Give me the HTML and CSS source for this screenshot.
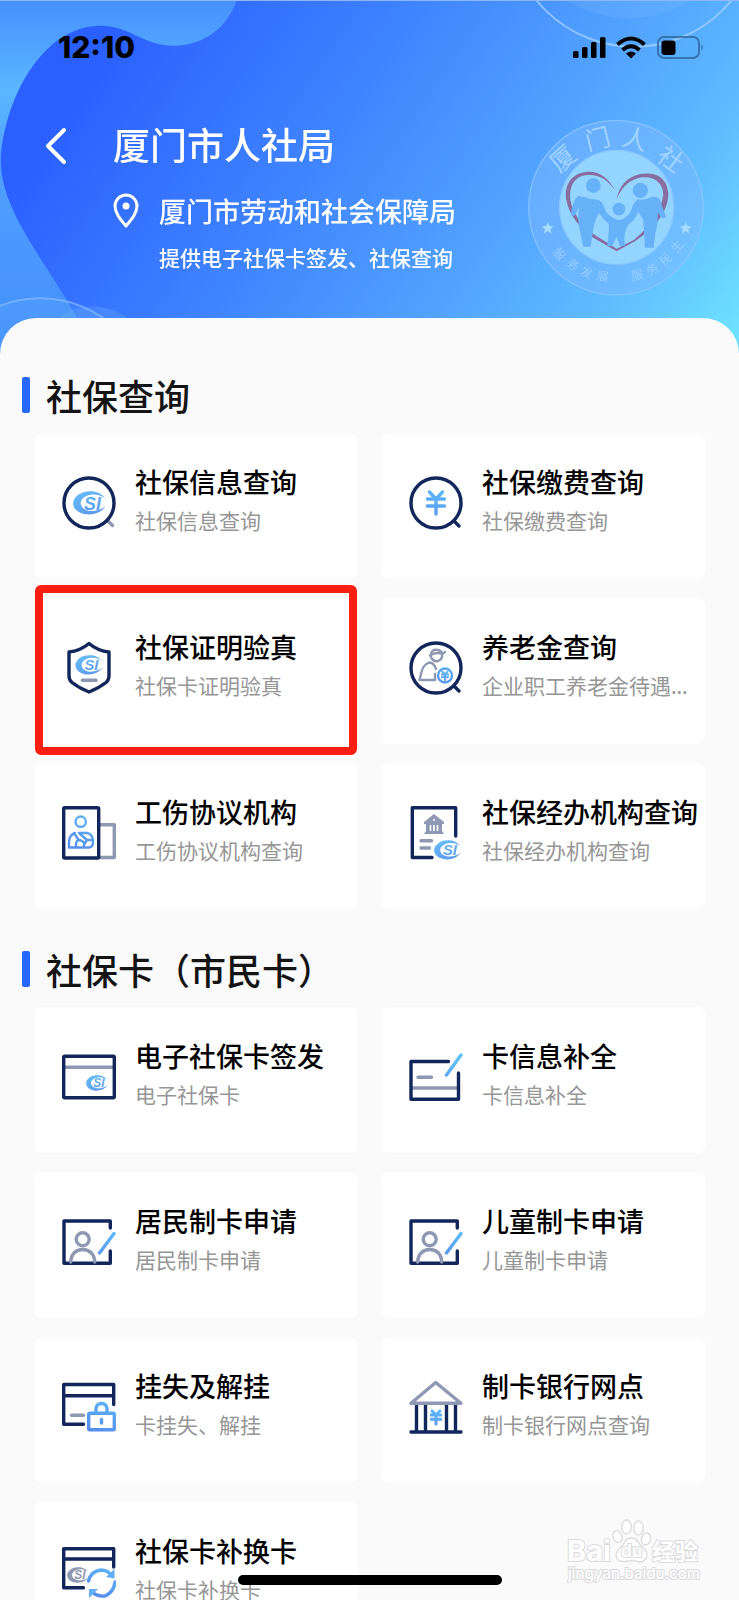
FILE: index.html
```
<!DOCTYPE html>
<html lang="zh-CN">
<head>
<meta charset="utf-8">
<meta name="viewport" content="width=device-width, initial-scale=1">
<title>厦门市人社局</title>
<link rel="stylesheet" href="styles.css">
</head>
<body>
<svg class="sprite" aria-hidden="true">
  <defs>
    <linearGradient id="blue" gradientUnits="userSpaceOnUse" x1="40" y1="6" x2="20" y2="50">
      <stop offset="0" stop-color="#5fc0fb"/><stop offset="1" stop-color="#5688ea"/>
    </linearGradient>
    <linearGradient id="logoBlue" gradientUnits="userSpaceOnUse" x1="20" y1="0" x2="50" y2="70">
      <stop offset="0" stop-color="#66bdf7"/><stop offset="1" stop-color="#5c9bef"/>
    </linearGradient>
    <symbol id="csi" viewBox="0 0 96 70">
      <path d="M93 22C80-2 40-5 18 9C-6 24-5 50 18 62C44 75 80 68 95 44C80 58 52 63 35 54C17 44 18 24 37 15C55 7 80 8 93 22Z"/>
      <text class="csi-text" x="32" y="54">SI</text>
    </symbol>
    <symbol id="yen" viewBox="0 0 20 26">
      <path d="M3.500 2L10 9L16.500 2M1.500 9H18.500M1.500 16H18.500M10 9V24"/>
    </symbol>
    <symbol id="person-card" viewBox="0 0 54 54">
      <path class="navy" d="M48.300 13V6H2V48.300H48.300V36"/>
      <circle class="grey" cx="20.700" cy="24.300" r="6.500"/>
      <path class="grey" d="M8.700 47C9 39 14 34.500 20.700 34.500S32.500 39 32.700 47"/>
      <path class="blue" d="M52 18.500L37.500 38"/>
    </symbol>
  </defs>
</svg>

<div class="app">
  <header class="hero">
    <svg class="hero-bg" viewBox="0 0 739 360" preserveAspectRatio="none" aria-hidden="true">
      <defs>
        <linearGradient id="back" x1="0" y1="0" x2="0" y2="1">
          <stop offset="0" stop-color="#4690ff"/><stop offset=".25" stop-color="#5bb6ff"/>
          <stop offset=".5" stop-color="#4f9fff"/><stop offset="1" stop-color="#438dfb"/>
        </linearGradient>
        <linearGradient id="front" gradientUnits="userSpaceOnUse" x1="80" y1="80" x2="650" y2="460">
          <stop offset="0" stop-color="#2a60ff"/><stop offset=".3" stop-color="#3c7fff"/>
          <stop offset=".6" stop-color="#50a0ff"/><stop offset=".82" stop-color="#60bbff"/><stop offset="1" stop-color="#6de0ff"/>
        </linearGradient>
      </defs>
      <rect width="739" height="360" fill="url(#back)"/>
      <path fill="url(#front)" d="M237 0C227 28 204 46 173 46C143 46 130 26 100 26C48 26 8 88 1 155C-3 205 40 255 72 311L100 360H739V0Z"/>
      <path fill="#76b9ff" fill-opacity=".25" d="M60 318Q92 298 126 318V340H60Z"/>
      <circle cx="629" cy="-101" r="119" fill="#7ec0ff" fill-opacity=".22"/>
      <circle cx="634" cy="-78" r="125" fill="none" stroke="#a6d6ff" stroke-opacity=".7" stroke-width="2"/>
      <circle cx="40" cy="411" r="111" fill="#62b2ff" fill-opacity=".2" stroke="#8fc6ff" stroke-opacity=".6" stroke-width="2"/>
      <path stroke="#8fb8f2" stroke-width="1" d="M0 .5H739"/>
    </svg>

    <svg class="seal" viewBox="0 0 630 630" role="img" aria-label="厦门人社 服务发展 服务民生">
      <circle cx="318" cy="323" r="262" fill="#80b8ff" fill-opacity=".45" stroke="#8cc8ff" stroke-opacity=".8" stroke-width="4"/>
      <circle cx="320" cy="322" r="171" fill="#94d5ff" stroke="#8ac9ff" stroke-width="4"/>
      <g class="seal-name">
        <text transform="translate(160 178) rotate(-42)" y="24">厦</text>
        <text transform="translate(264 120) rotate(-14)" y="24">门</text>
        <text transform="translate(375 120) rotate(15)" y="24">人</text>
        <text transform="translate(480 180) rotate(36)" y="24">社</text>
      </g>
      <g class="seal-motto">
        <text transform="translate(147 463) rotate(48)" y="12">服</text>
        <text transform="translate(187 495) rotate(37)" y="12">务</text>
        <text transform="translate(230 518) rotate(24)" y="12">发</text>
        <text transform="translate(278 530) rotate(10)" y="12">展</text>
        <text transform="translate(382 526) rotate(-14)" y="12">服</text>
        <text transform="translate(428 508) rotate(-28)" y="12">务</text>
        <text transform="translate(468 478) rotate(-40)" y="12">民</text>
        <text transform="translate(502 440) rotate(-50)" y="12">生</text>
      </g>
      <path id="star" fill="#a5dcff" d="M113 365L118 378L132 379L121 388L125 401L113 393L101 401L105 388L95 379L109 378Z"/>
      <use href="#star" x="414"/>
      <path fill="#876e9f" d="M316 272C285 216 250 214 226 216C180 222 160 262 170 305C178 345 215 390 247 412L320 454L375 424C440 380 474 335 475 280C470 225 430 216 390 222C350 232 328 256 320 298C336 258 362 238 395 232C435 228 460 250 460 285C452 335 425 375 371 420L320 446L250 402C215 375 188 340 181 300C176 258 195 230 226 226C262 221 290 235 316 272Z"/>
      <g fill="#66b1f8">
        <circle cx="250" cy="257" r="22"/><circle cx="391" cy="271" r="23"/><circle cx="327" cy="327" r="19"/>
        <path d="M205 288Q225 290 245 298Q277 296 282 322Q290 350 326 361Q357 354 366 325Q372 305 385 298Q405 302 426 290Q450 288 455 315L468 350Q462 361 450 348L443 336Q446 365 436 400L431 443H405Q402 400 400 360L385 335Q373 362 355 374Q338 398 345 438H330L320 412L306 438H292Q296 400 297 372Q280 360 268 340Q258 350 250 385L242 440H220L209 390Q202 362 207 322L195 346Q184 351 183 342Q188 300 205 288Z"/>
      </g>
    </svg>

    <div class="status">
      <span class="clock">12:10</span>
      <svg class="status-icons" viewBox="0 0 133 25" role="img" aria-label="信号、无线网络和电池">
        <rect x="1" y="16" width="5.500" height="7" rx="1.500"/><rect x="10" y="12" width="5.500" height="11" rx="1.500"/>
        <rect x="19" y="7" width="5.500" height="16" rx="1.500"/><rect x="28" y="2" width="5.500" height="21" rx="1.500"/>
        <g fill="none" stroke="#000" stroke-width="4"><path d="M45.500 9.500Q59 -2.500 72.500 9.500"/><path d="M50.500 15Q59 7.500 67.500 15"/></g>
        <path d="M54 18.500Q59 14.500 64 18.500L59 23.500Z"/>
        <rect x="86" y="2" width="41" height="21" rx="6" fill="none" stroke="#2a6699" stroke-opacity=".8" stroke-width="2"/>
        <rect x="89.500" y="5.500" width="14" height="14.500" rx="3"/>
        <path fill="#2a6699" d="M129.500 9Q132 12.500 129.500 16Z"/>
      </svg>
    </div>

    <div class="nav">
      <button class="back" type="button" aria-label="返回">
        <svg viewBox="0 0 24 40"><path d="M20 4L4 20L20 36"/></svg>
      </button>
      <div class="intro">
        <h1>厦门市人社局</h1>
        <div class="bureau">
          <svg class="pin" viewBox="0 0 26 36" aria-hidden="true"><path d="M13 33C7 26 2 20 2 13A11 11 0 0 1 24 13C24 20 19 26 13 33Z"/><circle cx="13" cy="13" r="3.500"/></svg>
          <p>厦门市劳动和社会保障局</p>
        </div>
        <p class="note">提供电子社保卡签发、社保查询</p>
      </div>
    </div>
  </header>

  <main class="sheet">
    <section>
      <h2>社保查询</h2>
      <div class="cards">
        <a class="card" href="#info">
          <svg class="icon" viewBox="0 0 54 54" aria-hidden="true"><path class="grey" d="M45 44L50.500 49.500"/><circle class="navy" cx="27" cy="27" r="25"/><use class="logo" href="#csi" x="11" y="15" width="33" height="24"/></svg>
          <div class="text"><h3>社保信息查询</h3><p>社保信息查询</p></div>
        </a>
        <a class="card" href="#payment">
          <svg class="icon" viewBox="0 0 54 54" aria-hidden="true"><circle class="navy" cx="27" cy="27" r="25"/><path class="navy" d="M45 45L50 50"/><use class="blue" href="#yen" x="17" y="14" width="20" height="26"/></svg>
          <div class="text"><h3>社保缴费查询</h3><p>社保缴费查询</p></div>
        </a>
        <a class="card marked" href="#verify">
          <svg class="icon" viewBox="0 0 54 54" aria-hidden="true"><path class="navy" d="M27 2.500Q18 10 7 11V35Q7 39 10 41.500Q17 47 27 51Q37 47 44 41.500Q47 39 47 35V11Q36 10 27 2.500Z"/><use class="logo" href="#csi" x="13" y="14" width="28" height="20"/><path class="grey" d="M20.500 39.300H34"/></svg>
          <div class="text"><h3>社保证明验真</h3><p>社保卡证明验真</p></div>
        </a>
        <a class="card" href="#pension">
          <svg class="icon" viewBox="0 0 54 54" aria-hidden="true"><circle class="navy" cx="27" cy="27" r="25"/><path class="navy" d="M45 45L50 50"/>
            <g class="grey thin"><path d="M22 13Q23 8 29 9Q33 10 33 13L36 11M21 14.500Q26 11 33 12.500M22 16Q24 21 29 20Q34 18 33 13M27 28Q25 21.500 20 21.500Q14 24 12.500 31L10.500 39H26V33"/></g>
            <g class="blue thin"><circle cx="36" cy="34.500" r="7"/></g><use class="blue heavy" href="#yen" x="32" y="30" width="8" height="10"/></svg>
          <div class="text"><h3>养老金查询</h3><p>企业职工养老金待遇资格查询</p></div>
        </a>
        <a class="card" href="#injury">
          <svg class="icon" viewBox="0 0 54 54" aria-hidden="true"><path class="grey" d="M38 18.700H52.300V51.500H38"/><rect class="navy" x="1.700" y="1.700" width="35" height="50.300" rx="1"/>
            <g class="blue thin"><circle cx="18.700" cy="15.700" r="5.200"/><path d="M13 27Q7 29 7 36V41.500H27Q31 41 31 36Q31 28 25 27H17L25 34L23 37L18 34Q14 34 14 38V41M12 27L16 33M25 34H31M22 41V38"/></g></svg>
          <div class="text"><h3>工伤协议机构</h3><p>工伤协议机构查询</p></div>
        </a>
        <a class="card" href="#agency">
          <svg class="icon" viewBox="0 0 54 54" aria-hidden="true"><path class="navy" d="M46.700 30V1.700H3.300V51.500H23"/>
            <path class="grey-fill" d="M25 8L35 16V18H33V25L35 28H15L17 25V18H15V16Z"/><path class="gap" d="M21.500 19V25M25 19V25M28.500 19V25M24 14H26"/>
            <path class="grey" d="M12 34.700H22.500M12 42H20.500"/><use class="logo" href="#csi" x="25" y="34" width="27" height="20"/></svg>
          <div class="text"><h3>社保经办机构查询</h3><p>社保经办机构查询</p></div>
        </a>
      </div>
    </section>

    <section>
      <h2>社保卡（市民卡）</h2>
      <div class="cards">
        <a class="card" href="#ecard">
          <svg class="icon" viewBox="0 0 54 54" aria-hidden="true"><path class="grey" d="M3 17.300H51"/><rect class="navy" x="1.700" y="6.300" width="50.600" height="41.500" rx="1"/><use class="logo" href="#csi" x="24" y="25" width="22" height="16"/></svg>
          <div class="text"><h3>电子社保卡签发</h3><p>电子社保卡</p></div>
        </a>
        <a class="card" href="#complete">
          <svg class="icon" viewBox="0 0 54 54" aria-hidden="true"><path class="grey" d="M3 38H49M9 27.300H22.500"/><path class="navy" d="M39.500 11.500H2V49.300H49.500V23"/><path class="blue" d="M52 5L37.500 25"/></svg>
          <div class="text"><h3>卡信息补全</h3><p>卡信息补全</p></div>
        </a>
        <a class="card" href="#resident">
          <svg class="icon" viewBox="0 0 54 54" aria-hidden="true"><use href="#person-card" width="54" height="54"/></svg>
          <div class="text"><h3>居民制卡申请</h3><p>居民制卡申请</p></div>
        </a>
        <a class="card" href="#child">
          <svg class="icon" viewBox="0 0 54 54" aria-hidden="true"><use href="#person-card" width="54" height="54"/></svg>
          <div class="text"><h3>儿童制卡申请</h3><p>儿童制卡申请</p></div>
        </a>
        <a class="card" href="#loss">
          <svg class="icon" viewBox="0 0 54 54" aria-hidden="true"><path class="navy" d="M51.700 24.500V4.500H1.700V44.300H21.500M2 15.700H51"/><path class="grey" d="M9.500 35.300H21.500"/><g class="blue"><rect x="26.700" y="33.300" width="25.600" height="16.500" rx="1"/><path d="M34 33V28.500Q34.500 23.500 39.500 23.500T45 28.500V33M39.500 39.500V43"/></g></svg>
          <div class="text"><h3>挂失及解挂</h3><p>卡挂失、解挂</p></div>
        </a>
        <a class="card" href="#bank">
          <svg class="icon" viewBox="0 0 54 54" aria-hidden="true"><path class="navy" d="M7.500 25V51M16.500 25V51M37.500 25V51M46.500 25V51M2 52H52"/><path class="grey" d="M26.700 2.500L2 23.300H52Z"/><use class="blue heavy" href="#yen" x="21" y="28" width="12" height="19"/></svg>
          <div class="text"><h3>制卡银行网点</h3><p>制卡银行网点查询</p></div>
        </a>
        <a class="card" href="#replace">
          <svg class="icon" viewBox="0 0 54 54" aria-hidden="true"><path class="navy" d="M51.700 22V3.700H1.700V42.700H21.500M2 14H51"/><use class="logo-grey" href="#csi" x="5" y="22" width="22" height="16"/>
            <path class="blue" d="M26.500 36Q29 26 39 25Q46 25 50 31M53 37Q52 47 43 51Q35 52 29 46"/><path class="blue-fill" d="M44 32L52.500 24V33.500ZM27 53V44H36Z"/></svg>
          <div class="text"><h3>社保卡补换卡</h3><p>社保卡补换卡</p></div>
        </a>
      </div>
    </section>
  </main>

  <svg class="watermark" viewBox="0 0 138 68" role="img" aria-label="Baidu 经验 jingyan.baidu.com">
    <text class="wm-bai" x="2" y="43">Bai</text>
    <ellipse cx="52.500" cy="18.500" rx="4.500" ry="6" transform="rotate(-15 52.500 18.500)"/><ellipse cx="61.500" cy="9" rx="4.800" ry="7"/>
    <ellipse cx="73.500" cy="10" rx="4.800" ry="7"/><ellipse cx="81" cy="21" rx="4.500" ry="6" transform="rotate(15 81 21)"/>
    <path d="M66.500 20Q72 20 75 27Q82 32 82 37Q81 45 73 43.500Q66 42 60 43.500Q51 44 51 37Q52 32 58 27Q61 20 66.500 20Z"/>
    <text class="wm-du" x="56" y="39">du</text>
    <text class="wm-cn" x="87" y="42">经验</text>
    <text class="wm-url" x="3" y="61">jingyan.baidu.com</text>
  </svg>
  <div class="home-bar"></div>
</div>
</body>
</html>
```
FILE: styles.css
```
* {
  box-sizing: border-box;
}

body,
h1,
h2,
h3,
p {
  margin: 0;
}

body {
  font-family: "Noto Sans CJK SC", sans-serif;
  background: #fafafb;
}

.sprite {
  position: absolute;
  width: 0;
  height: 0;
}

.app {
  position: relative;
  height: 100vh;
  overflow: hidden;
  background: #fafafb;
}

/* Header */
.hero {
  position: relative;
  padding-bottom: 86px;
  color: #fff;
}

.hero-bg {
  position: absolute;
  top: 0;
  left: 0;
  width: 100%;
  height: 100%;
}

.seal {
  position: absolute;
  top: 100px;
  right: 19px;
  width: 210px;
}

.seal text {
  fill: #9fd5ff;
  text-anchor: middle;
}

.seal-name {
  font-size: 75px;
}

.seal-motto {
  font-size: 36px;
  opacity: 0.8;
}

.status {
  position: relative;
  display: flex;
  align-items: center;
  justify-content: space-between;
  height: 94px;
  padding: 0 34px 0 58px;
}

.clock {
  font: 800 30px/32px Inter, sans-serif;
  color: #000;
}

.status-icons {
  width: 133px;
  height: 25px;
}

.nav {
  position: relative;
  display: flex;
  align-items: flex-start;
  gap: 45px;
  padding: 24px 44px 0;
}

.back {
  display: flex;
  align-items: center;
  width: 24px;
  height: 56px;
  padding: 0;
  border: 0;
  background: none;
}

.back svg {
  width: 24px;
  height: 40px;
  fill: none;
  stroke: #fff;
  stroke-width: 4;
  stroke-linecap: round;
  stroke-linejoin: round;
}

.intro h1 {
  font-size: 37px;
  font-weight: 500;
  line-height: 52px;
}

.bureau {
  display: flex;
  align-items: center;
  gap: 20px;
  margin-top: 23px;
  font-size: 27px;
  font-weight: 500;
  line-height: 36px;
}

.pin {
  width: 26px;
  height: 36px;
  fill: none;
  stroke: #fff;
  stroke-width: 3;
  stroke-linejoin: round;
}

.pin circle {
  fill: #fff;
  stroke: none;
}

.note {
  margin-top: 13px;
  padding-left: 46px;
  font-size: 21px;
  font-weight: 500;
  line-height: 30px;
}

/* Content sheet */
.sheet {
  position: relative;
  display: flex;
  flex-direction: column;
  gap: 42px;
  margin-top: -40px;
  padding-top: 59px;
  border-radius: 36px 36px 0 0;
  background: #fafafb;
}

h2 {
  display: flex;
  align-items: center;
  gap: 16px;
  height: 36px;
  margin: 0 22px 20px;
  color: #141414;
  font-size: 36px;
  font-weight: 500;
  line-height: 32px;
}

h2::before {
  content: "";
  width: 8px;
  height: 36px;
  border-radius: 2px;
  background: #2867fb;
}

.cards {
  display: grid;
  grid-template-columns: 1fr 1fr;
  gap: 19px 23px;
  padding: 0 34px;
}

.card {
  position: relative;
  display: flex;
  align-items: flex-start;
  gap: 19px;
  min-width: 0;
  padding: 30px 6px 38px 28px;
  border-radius: 8px;
  background: #fff;
  color: #000;
  text-decoration: none;
}

.marked::after {
  content: "";
  position: absolute;
  inset: -13px 1px -11px;
  border: 8px solid #fc1e10;
  border-radius: 6px;
}

.text {
  flex: 1;
  min-width: 0;
}

.text h3 {
  font-size: 27px;
  font-weight: 500;
  line-height: 38px;
  white-space: nowrap;
}

.text p {
  overflow: hidden;
  color: #969696;
  font-family: "Noto Sans", "Noto Sans CJK SC", sans-serif;
  font-size: 21px;
  line-height: 40px;
  text-overflow: ellipsis;
  white-space: nowrap;
}

/* Icons */
.icon {
  flex: none;
  width: 54px;
  height: 54px;
  margin-top: 13px;
}

.navy,
.grey,
.blue {
  fill: none;
  stroke-width: 3.4px;
  stroke-linecap: round;
  stroke-linejoin: round;
}

.navy {
  stroke: #12265b;
}

.grey {
  stroke: #8f98b3;
}

.blue {
  stroke: url(#blue);
}

.thin {
  stroke-width: 2.4px;
}

.heavy {
  stroke-width: 5px;
}

.grey-fill {
  fill: #8f98b3;
}

.blue-fill {
  fill: #62aef5;
}

.gap {
  stroke: #fff;
  stroke-width: 1.6px;
}

.logo {
  fill: url(#logoBlue);
}

.logo-grey {
  fill: #8f98b3;
}

.csi-text {
  font: italic 700 52px "Liberation Sans", sans-serif;
}

/* Overlays */
.watermark {
  position: absolute;
  right: 36px;
  bottom: 14px;
  width: 138px;
  height: 68px;
  fill: #fff;
  stroke: #dcdcde;
  stroke-width: 1.4px;
}

.watermark text {
  paint-order: stroke;
  stroke-width: 2px;
  font-family: Inter, "Noto Sans CJK SC", sans-serif;
  font-weight: 700;
}

.wm-bai {
  font-size: 29px;
}

.wm-du {
  font-size: 17px;
}

.wm-cn {
  font-size: 23px;
}

.watermark .wm-url {
  font-size: 15px;
  font-weight: 500;
}

.home-bar {
  position: absolute;
  bottom: 15px;
  left: 50%;
  width: 264px;
  height: 10px;
  border-radius: 5px;
  background: #000;
  transform: translateX(-50%);
}
```
